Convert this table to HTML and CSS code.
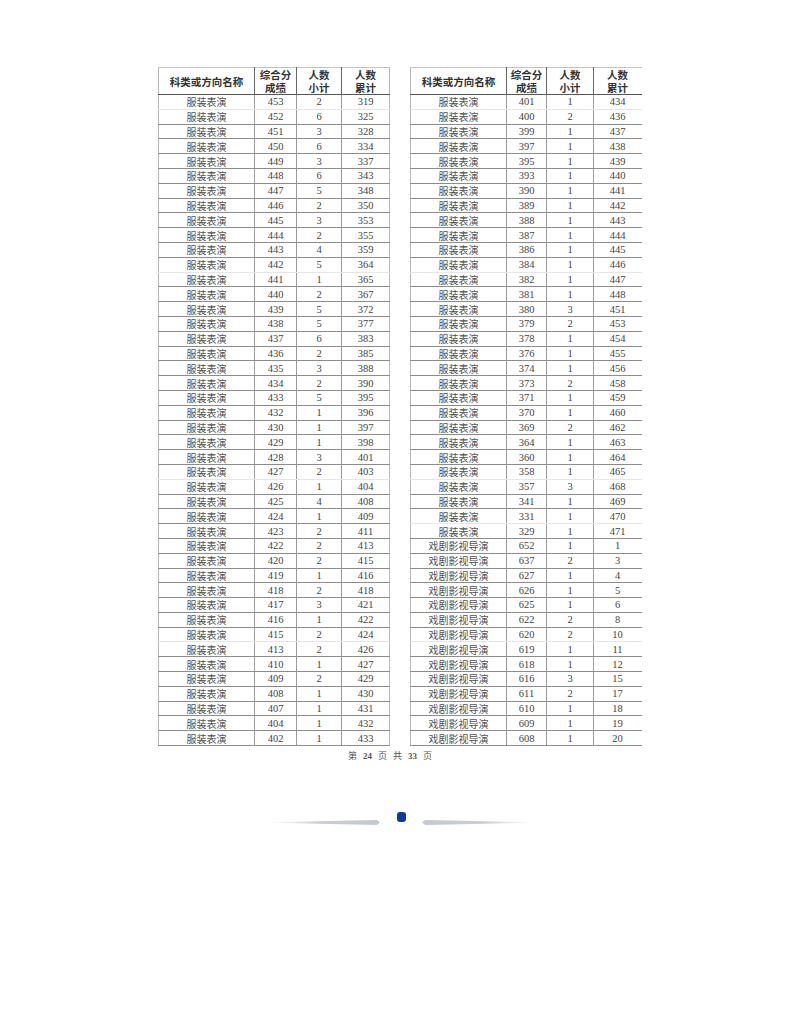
FILE: index.html
```html
<!DOCTYPE html>
<html lang="zh">
<head>
<meta charset="utf-8">
<title>第 24 页</title>
<link rel="stylesheet" href="styles.css">
</head>
<body>
<div class="page">
  <div class="tables">
    <table class="sheet sheet-left">
      <colgroup><col class="c1"><col class="c2"><col class="c3"><col class="c4"></colgroup>
      <thead>
        <tr><th>科类或方向名称</th><th>综合分<br>成绩</th><th>人数<br>小计</th><th>人数<br>累计</th></tr>
      </thead>
      <tbody>
        <tr><td>服装表演</td><td>453</td><td>2</td><td>319</td></tr>
        <tr class="nl"><td>服装表演</td><td>452</td><td>6</td><td>325</td></tr>
        <tr><td>服装表演</td><td>451</td><td>3</td><td>328</td></tr>
        <tr><td>服装表演</td><td>450</td><td>6</td><td>334</td></tr>
        <tr><td>服装表演</td><td>449</td><td>3</td><td>337</td></tr>
        <tr><td>服装表演</td><td>448</td><td>6</td><td>343</td></tr>
        <tr><td>服装表演</td><td>447</td><td>5</td><td>348</td></tr>
        <tr><td>服装表演</td><td>446</td><td>2</td><td>350</td></tr>
        <tr><td>服装表演</td><td>445</td><td>3</td><td>353</td></tr>
        <tr><td>服装表演</td><td>444</td><td>2</td><td>355</td></tr>
        <tr><td>服装表演</td><td>443</td><td>4</td><td>359</td></tr>
        <tr><td>服装表演</td><td>442</td><td>5</td><td>364</td></tr>
        <tr class="nl"><td>服装表演</td><td>441</td><td>1</td><td>365</td></tr>
        <tr><td>服装表演</td><td>440</td><td>2</td><td>367</td></tr>
        <tr><td>服装表演</td><td>439</td><td>5</td><td>372</td></tr>
        <tr><td>服装表演</td><td>438</td><td>5</td><td>377</td></tr>
        <tr><td>服装表演</td><td>437</td><td>6</td><td>383</td></tr>
        <tr><td>服装表演</td><td>436</td><td>2</td><td>385</td></tr>
        <tr><td>服装表演</td><td>435</td><td>3</td><td>388</td></tr>
        <tr><td>服装表演</td><td>434</td><td>2</td><td>390</td></tr>
        <tr><td>服装表演</td><td>433</td><td>5</td><td>395</td></tr>
        <tr><td>服装表演</td><td>432</td><td>1</td><td>396</td></tr>
        <tr><td>服装表演</td><td>430</td><td>1</td><td>397</td></tr>
        <tr><td>服装表演</td><td>429</td><td>1</td><td>398</td></tr>
        <tr><td>服装表演</td><td>428</td><td>3</td><td>401</td></tr>
        <tr><td>服装表演</td><td>427</td><td>2</td><td>403</td></tr>
        <tr class="nl"><td>服装表演</td><td>426</td><td>1</td><td>404</td></tr>
        <tr><td>服装表演</td><td>425</td><td>4</td><td>408</td></tr>
        <tr><td>服装表演</td><td>424</td><td>1</td><td>409</td></tr>
        <tr><td>服装表演</td><td>423</td><td>2</td><td>411</td></tr>
        <tr><td>服装表演</td><td>422</td><td>2</td><td>413</td></tr>
        <tr><td>服装表演</td><td>420</td><td>2</td><td>415</td></tr>
        <tr><td>服装表演</td><td>419</td><td>1</td><td>416</td></tr>
        <tr><td>服装表演</td><td>418</td><td>2</td><td>418</td></tr>
        <tr><td>服装表演</td><td>417</td><td>3</td><td>421</td></tr>
        <tr><td>服装表演</td><td>416</td><td>1</td><td>422</td></tr>
        <tr><td>服装表演</td><td>415</td><td>2</td><td>424</td></tr>
        <tr class="nl"><td>服装表演</td><td>413</td><td>2</td><td>426</td></tr>
        <tr><td>服装表演</td><td>410</td><td>1</td><td>427</td></tr>
        <tr><td>服装表演</td><td>409</td><td>2</td><td>429</td></tr>
        <tr><td>服装表演</td><td>408</td><td>1</td><td>430</td></tr>
        <tr><td>服装表演</td><td>407</td><td>1</td><td>431</td></tr>
        <tr><td>服装表演</td><td>404</td><td>1</td><td>432</td></tr>
        <tr><td>服装表演</td><td>402</td><td>1</td><td>433</td></tr>
      </tbody>
    </table>
    <table class="sheet sheet-right">
      <colgroup><col class="c1"><col class="c2r"><col class="c3r"><col class="c4"></colgroup>
      <thead>
        <tr><th>科类或方向名称</th><th>综合分<br>成绩</th><th>人数<br>小计</th><th>人数<br>累计</th></tr>
      </thead>
      <tbody>
        <tr><td>服装表演</td><td>401</td><td>1</td><td>434</td></tr>
        <tr class="nl"><td>服装表演</td><td>400</td><td>2</td><td>436</td></tr>
        <tr><td>服装表演</td><td>399</td><td>1</td><td>437</td></tr>
        <tr><td>服装表演</td><td>397</td><td>1</td><td>438</td></tr>
        <tr><td>服装表演</td><td>395</td><td>1</td><td>439</td></tr>
        <tr><td>服装表演</td><td>393</td><td>1</td><td>440</td></tr>
        <tr><td>服装表演</td><td>390</td><td>1</td><td>441</td></tr>
        <tr><td>服装表演</td><td>389</td><td>1</td><td>442</td></tr>
        <tr><td>服装表演</td><td>388</td><td>1</td><td>443</td></tr>
        <tr><td>服装表演</td><td>387</td><td>1</td><td>444</td></tr>
        <tr><td>服装表演</td><td>386</td><td>1</td><td>445</td></tr>
        <tr><td>服装表演</td><td>384</td><td>1</td><td>446</td></tr>
        <tr class="nl"><td>服装表演</td><td>382</td><td>1</td><td>447</td></tr>
        <tr><td>服装表演</td><td>381</td><td>1</td><td>448</td></tr>
        <tr><td>服装表演</td><td>380</td><td>3</td><td>451</td></tr>
        <tr><td>服装表演</td><td>379</td><td>2</td><td>453</td></tr>
        <tr><td>服装表演</td><td>378</td><td>1</td><td>454</td></tr>
        <tr><td>服装表演</td><td>376</td><td>1</td><td>455</td></tr>
        <tr><td>服装表演</td><td>374</td><td>1</td><td>456</td></tr>
        <tr><td>服装表演</td><td>373</td><td>2</td><td>458</td></tr>
        <tr><td>服装表演</td><td>371</td><td>1</td><td>459</td></tr>
        <tr><td>服装表演</td><td>370</td><td>1</td><td>460</td></tr>
        <tr><td>服装表演</td><td>369</td><td>2</td><td>462</td></tr>
        <tr><td>服装表演</td><td>364</td><td>1</td><td>463</td></tr>
        <tr><td>服装表演</td><td>360</td><td>1</td><td>464</td></tr>
        <tr><td>服装表演</td><td>358</td><td>1</td><td>465</td></tr>
        <tr class="nl"><td>服装表演</td><td>357</td><td>3</td><td>468</td></tr>
        <tr><td>服装表演</td><td>341</td><td>1</td><td>469</td></tr>
        <tr><td>服装表演</td><td>331</td><td>1</td><td>470</td></tr>
        <tr class="nl"><td>服装表演</td><td>329</td><td>1</td><td>471</td></tr>
        <tr><td>戏剧影视导演</td><td>652</td><td>1</td><td>1</td></tr>
        <tr><td>戏剧影视导演</td><td>637</td><td>2</td><td>3</td></tr>
        <tr><td>戏剧影视导演</td><td>627</td><td>1</td><td>4</td></tr>
        <tr><td>戏剧影视导演</td><td>626</td><td>1</td><td>5</td></tr>
        <tr><td>戏剧影视导演</td><td>625</td><td>1</td><td>6</td></tr>
        <tr><td>戏剧影视导演</td><td>622</td><td>2</td><td>8</td></tr>
        <tr><td>戏剧影视导演</td><td>620</td><td>2</td><td>10</td></tr>
        <tr class="nl"><td>戏剧影视导演</td><td>619</td><td>1</td><td>11</td></tr>
        <tr><td>戏剧影视导演</td><td>618</td><td>1</td><td>12</td></tr>
        <tr><td>戏剧影视导演</td><td>616</td><td>3</td><td>15</td></tr>
        <tr><td>戏剧影视导演</td><td>611</td><td>2</td><td>17</td></tr>
        <tr><td>戏剧影视导演</td><td>610</td><td>1</td><td>18</td></tr>
        <tr><td>戏剧影视导演</td><td>609</td><td>1</td><td>19</td></tr>
        <tr><td>戏剧影视导演</td><td>608</td><td>1</td><td>20</td></tr>
      </tbody>
    </table>
  </div>
  <p class="pager">第 <b>24</b> 页 共 <b>33</b> 页</p>
  <div class="divider">
    <span class="line line-left"></span>
    <span class="dot"></span>
    <span class="line line-right"></span>
  </div>
</div>
</body>
</html>
```

FILE: styles.css
```css
html, body {
  margin: 0;
  padding: 0;
  background: #ffffff;
}

.page {
  width: 800px;
  padding-top: 67px;
  font-family: "Liberation Serif", "Noto Sans CJK SC", serif;
  color: #3c3c3c;
}

.tables {
  display: flex;
  gap: 20px;
  margin-left: 158px;
}

.sheet {
  border-collapse: collapse;
  table-layout: fixed;
  width: 231px;
}

.sheet .c1 { width: 96px; }
.sheet .c2 { width: 42px; }
.sheet .c3 { width: 45px; }
.sheet .c4 { width: 48px; }
.sheet .c2r { width: 40px; }
.sheet .c3r { width: 47px; }

.sheet thead tr {
  height: 27px;
}

.sheet th {
  font-family: "Noto Sans CJK SC", sans-serif;
  font-weight: 700;
  font-size: 10.5px;
  line-height: 13px;
  color: #333;
  padding: 0;
  text-align: center;
  vertical-align: middle;
  border-top: 1px solid #c4c4c4;
  border-bottom: 1px solid #555;
  border-left: 1px solid #666;
  border-right: 1px solid #666;
}

.sheet th:first-child {
  border-left-color: #b4b4b4;
}

.sheet tbody tr {
  height: 14.8px;
}

.sheet td {
  padding: 0;
  text-align: center;
  vertical-align: middle;
  font-size: 10.5px;
  line-height: 13px;
  white-space: nowrap;
  color: #444;
  border-bottom: 1px solid #8c8c8c;
  border-left: 1px solid #9a9a9a;
  border-right: 1px solid #9a9a9a;
}

.sheet tbody tr.nl td {
  border-top-color: transparent;
}

.sheet tbody tr:has(+ tr.nl) td {
  border-bottom-color: #e6e6e6;
}

.sheet td:first-child {
  font-family: "Noto Sans CJK SC", sans-serif;
  font-weight: 400;
  font-size: 10px;
  color: #505050;
  border-left-color: #b4b4b4;
}

.sheet td:nth-child(2) {
  border-left-color: #555;
}

.sheet-right th:last-child,
.sheet-right td:last-child {
  border-right-color: transparent;
}

.sheet-left th:last-child,
.sheet-left td:last-child {
  border-right-color: #b8b8b8;
}

.pager {
  margin: 5px 0 0 158px;
  width: 482px;
  padding-right: 18px;
  box-sizing: border-box;
  text-align: center;
  font-family: "Noto Sans CJK SC", sans-serif;
  font-size: 9px;
  line-height: 10px;
  color: #555;
  word-spacing: 4px;
}

.pager b {
  font-family: "Liberation Serif", serif;
  font-weight: 700;
  font-size: 9px;
}

.divider {
  display: flex;
  align-items: flex-start;
  margin: 51px 0 0 270px;
  width: 264px;
  height: 16px;
}

.line {
  display: block;
  height: 5px;
  margin-top: 8px;
  border-radius: 3px;
}

.line-left {
  width: 110px;
  background: linear-gradient(to right, rgba(196, 201, 210, 0) 0%, #c8cdd6 45%, #c3c8d1 100%);
  clip-path: polygon(0 45%, 97% 0, 100% 50%, 97% 100%, 0 55%);
  margin-right: 17px;
}

.line-right {
  width: 111px;
  background: linear-gradient(to left, rgba(196, 201, 210, 0) 0%, #c8cdd6 45%, #c3c8d1 100%);
  clip-path: polygon(3% 0, 100% 45%, 100% 55%, 3% 100%, 0 50%);
  margin-left: 16px;
}

.dot {
  display: block;
  width: 9px;
  height: 10px;
  border-radius: 3px;
  background: #0b3aa0;
}
```
